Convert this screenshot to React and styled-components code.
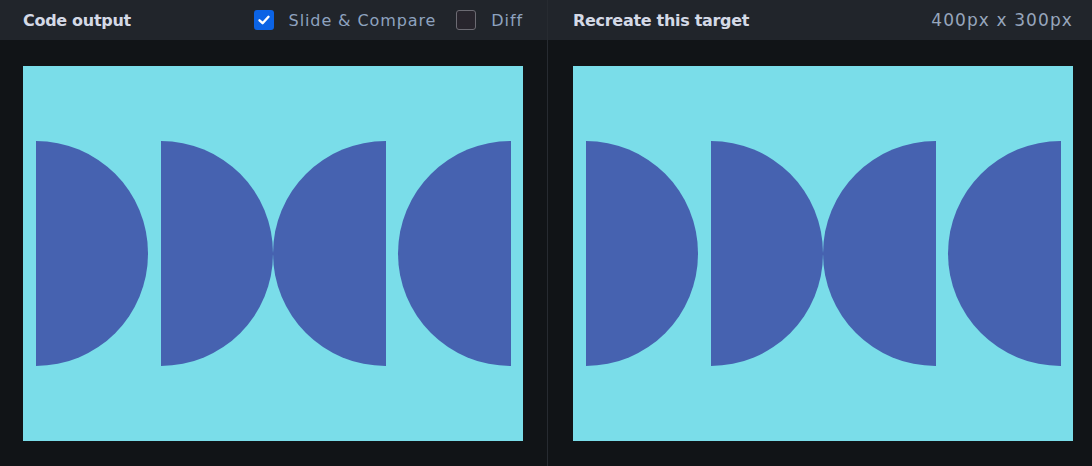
import React from "react";
import styled, { createGlobalStyle } from "styled-components";

const GlobalStyle = createGlobalStyle`
  html, body {
    margin: 0;
    padding: 0;
    background: #111417;
  }
  * { box-sizing: border-box; }
`;

const Page = styled.div`
  display: flex;
  width: 1092px;
  height: 466px;
  background: #111417;
  font-family: "DejaVu Sans", Inter, sans-serif;
`;

const Pane = styled.section`
  display: flex;
  flex-direction: column;
  width: ${(p) => p.$width}px;
  border-left: ${(p) => (p.$divider ? "1px solid #272b31" : "none")};
`;

const Header = styled.header`
  display: flex;
  align-items: center;
  height: 40px;
  padding: 0 ${(p) => p.$right}px 0 ${(p) => p.$left}px;
  background: #21252b;
`;

const Title = styled.h2`
  margin: 0;
  flex: 1;
  font-size: 16px;
  font-weight: 700;
  letter-spacing: -0.3px;
  color: #d4d9e6;
`;

const Size = styled.span`
  font-size: 17px;
  color: #97a6bc;
  letter-spacing: 1.1px;
`;

const Toggle = styled.label`
  display: flex;
  align-items: center;
  gap: 15px;
  margin-left: ${(p) => p.$gap}px;
  font-size: 16px;
  letter-spacing: 0.9px;
  color: #8ea2bf;
`;

const Box = styled.span`
  display: flex;
  align-items: center;
  justify-content: center;
  width: 20px;
  height: 20px;
  border-radius: 3px;
  background: ${(p) => (p.$checked ? "#0b63e5" : "#28252d")};
  border: ${(p) => (p.$checked ? "none" : "1px solid #6c6b73")};
`;

const Body = styled.div`
  flex: 1;
  padding: 26px 0 0 ${(p) => p.$left}px;
`;

const Canvas = styled.div`
  display: flex;
  align-items: center;
  width: 500px;
  height: 375px;
  padding-left: 12.5px;
  background: #7adde9;
`;

const Half = styled.div`
  width: 112.5px;
  height: 225px;
  margin-left: ${(p) => p.$offset}px;
  background: #4662b0;
  border-radius: ${(p) =>
    p.$flip ? "112.5px 0 0 112.5px" : "0 112.5px 112.5px 0"};
`;

const Check = () => (
  <svg width="14" height="14" viewBox="0 0 14 14">
    <path
      d="M2.5 7.3 L5.6 10.2 L11.5 3.8"
      fill="none"
      stroke="#fff"
      strokeWidth="2.4"
      strokeLinecap="round"
      strokeLinejoin="round"
    />
  </svg>
);

const Target = () => (
  <Canvas>
    <Half />
    <Half $offset={12.5} />
    <Half $flip />
    <Half $flip $offset={12.5} />
  </Canvas>
);

export default function App() {
  return (
    <>
      <GlobalStyle />
      <Page>
        <Pane $width={547}>
          <Header $left={23} $right={24}>
            <Title>Code output</Title>
            <Toggle>
              <Box $checked>
                <Check />
              </Box>
              Slide &amp; Compare
            </Toggle>
            <Toggle $gap={20}>
              <Box />
              Diff
            </Toggle>
          </Header>
          <Body $left={23}>
            <Target />
          </Body>
        </Pane>
        <Pane $width={545} $divider>
          <Header $left={25} $right={19}>
            <Title>Recreate this target</Title>
            <Size>400px x 300px</Size>
          </Header>
          <Body $left={25}>
            <Target />
          </Body>
        </Pane>
      </Page>
    </>
  );
}
